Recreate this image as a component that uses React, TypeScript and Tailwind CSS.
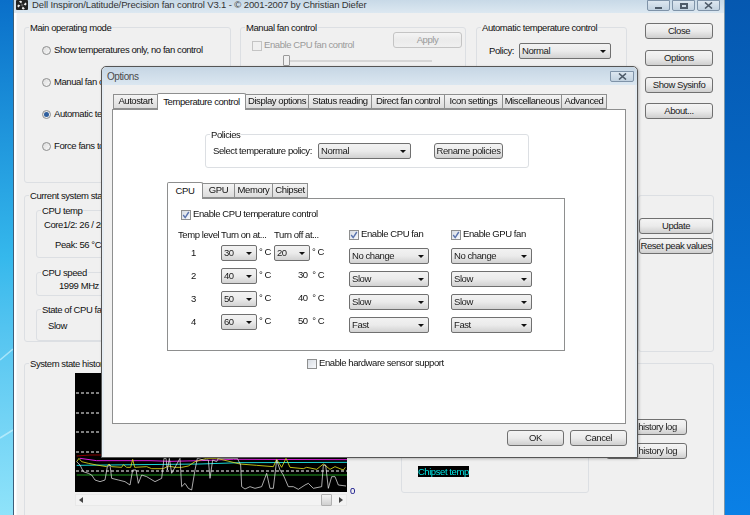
import React from 'react';

const Btn = ({ label, className = '' }: { label: string; className?: string }) => (
  <div className={`h-[16px] flex items-center justify-center border border-[#707070] rounded-[3px] bg-gradient-to-b from-[#f4f4f4] via-[#ebebeb] to-[#cfcfcf] text-[#1a1a1a] whitespace-nowrap ${className}`}>
    {label}
  </div>
);

const Combo = ({ value, className = '' }: { value: string; className?: string }) => (
  <div className={`h-[16px] flex items-center justify-between pl-[2px] pr-[4px] border border-[#707070] rounded-[2px] bg-gradient-to-b from-[#f2f2f2] via-[#ebebeb] to-[#d2d2d2] text-[#1a1a1a] ${className}`}>
    <span>{value}</span>
    <svg width="6" height="3" viewBox="0 0 6 3"><path d="M0 0h6L3 3z" fill="#111" /></svg>
  </div>
);

const Check = ({ label, checked, disabled }: { label: string; checked?: boolean; disabled?: boolean }) => (
  <div className="h-[13px] flex items-center gap-[2px] whitespace-nowrap">
    <div className={`w-[10px] h-[10px] border flex items-center justify-center ${disabled ? 'border-[#c4c4c4] bg-[#f0f0f0]' : 'border-[#8e8f8f] bg-gradient-to-br from-[#d8dde4] to-[#f8f9fb]'}`}>
      {checked && (
        <svg width="8" height="8" viewBox="0 0 8 8"><path d="M1.2 4l2 2.6L6.8 1" fill="none" stroke="#5a74ae" strokeWidth="1.4" /></svg>
      )}
    </div>
    <span className={disabled ? 'text-[#9a9a9a]' : ''}>{label}</span>
  </div>
);

const Radio = ({ label, checked }: { label: string; checked?: boolean }) => (
  <div className="h-[13px] flex items-center gap-[3px] whitespace-nowrap">
    <div className="w-[9px] h-[9px] rounded-full border border-[#8e8f8f] bg-gradient-to-br from-[#dcdcdc] to-[#f8f8f8] flex items-center justify-center">
      {checked && <div className="w-[5px] h-[5px] rounded-full bg-[#2f5f9e]" />}
    </div>
    <span>{label}</span>
  </div>
);

const Group = ({ title, className = '', children }: { title?: string; className?: string; children?: React.ReactNode }) => (
  <fieldset className={`min-w-0 border border-[#dcdfe3] rounded-[3px] ${className}`}>
    {title && <legend className="ml-[4px] px-[1px] h-[13px] leading-[13px] whitespace-nowrap">{title}</legend>}
    {children}
  </fieldset>
);

const Tab = ({ label, width, active }: { label: string; width: string; active?: boolean }) => (
  <div
    className={`${width} flex items-center justify-center whitespace-nowrap border border-[#8e8f8f] ${
      active
        ? 'relative z-10 h-[17px] -mb-px -mt-[1px] border-b-0 bg-white rounded-t-[2px]'
        : 'h-[15px] -ml-px bg-gradient-to-b from-[#f4f4f4] to-[#dcdcdc]'
    }`}
  >
    {label}
  </div>
);

const TitleBtn = ({ children, w = 'w-[23px]' }: { children: React.ReactNode; w?: string }) => (
  <div className={`${w} h-[11px] flex items-center justify-center border border-[#7f93a8] rounded-b-[2px] bg-gradient-to-b from-[#dde7f0] to-[#c2d2e0]`}>
    {children}
  </div>
);

const CloseGlyph = () => (
  <svg width="9" height="7" viewBox="0 0 9 7"><path d="M1 0.5l7 6M8 0.5l-7 6" stroke="#4d5a68" strokeWidth="1.6" /></svg>
);

const tempRows = [
  { level: '1', on: '30', off: '20' },
  { level: '2', on: '40', off: '30' },
  { level: '3', on: '50', off: '40' },
  { level: '4', on: '60', off: '50' },
];
const fanValues = ['No change', 'Slow', 'Slow', 'Fast'];

const whitePts =
  '50,215 60,225 70,245 85,250 95,255 105,270 120,275 135,270 142,230 150,225 155,265 175,270 195,275 210,285 218,240 228,240 235,280 245,255 260,260 285,275 305,265 312,205 318,205 322,240 328,205 335,250 360,205 365,290 375,280 385,295 395,300 405,240 412,205 430,210 445,210 450,265 458,210 470,215 475,205 525,205 532,205 542,225 545,290 555,297 570,290 585,295 605,290 620,250 630,295 640,295 650,210 660,240 670,255 685,290 700,290 715,298 735,285 745,280 760,295 785,290 790,225 797,225 805,295 815,260 825,260 835,285 858,288';
const yellowPts =
  '50,215 57,205 65,215 85,220 110,225 140,230 147,222 155,230 185,232 190,224 200,232 212,232 218,208 224,232 260,230 275,236 310,236 325,228 345,232 365,232 385,228 405,215 440,205 470,205 540,222 590,226 640,230 650,208 665,232 678,205 690,232 730,236 740,232 770,238 790,222 810,238 825,230 850,240 856,232';

const Chart = () => (
  <svg width="272" height="119" viewBox="45 -51 816 357" className="bg-black block">
    {[9, 69, 126, 186, 243].map((y) => (
      <line key={y} x1="48" x2="861" y1={y} y2={y} stroke="#fff" strokeWidth="3" strokeDasharray="9 6" />
    ))}
    <polyline points="50,198 90,195 861,195" fill="none" stroke="#8b0000" strokeWidth="3" />
    <polyline points="50,255 861,255" fill="none" stroke="#1f9a1f" strokeWidth="3" />
    <polyline points="50,226 420,222 540,218 861,217" fill="none" stroke="#19d8d8" strokeWidth="3" />
    <polyline points="60,205 110,212 270,212 330,214 420,212 520,208 861,209" fill="none" stroke="#e020e0" strokeWidth="3" />
    <polyline points={yellowPts} fill="none" stroke="#e8e820" strokeWidth="2.4" />
    <polyline points={whitePts} fill="none" stroke="#e8e8e8" strokeWidth="2.2" />
  </svg>
);

const OptionsDialog = () => (
  <div className="absolute left-[101px] top-[66px] w-[537px] h-[392px] flex flex-col border border-[#555] rounded-t-[5px] bg-[#f0f0f0] shadow-[1px_1px_3px_rgba(0,0,0,0.25)]">
    <div className="h-[18px] shrink-0 flex items-center justify-between pl-[5px] pr-[3px] rounded-t-[5px] bg-gradient-to-b from-[#c6d6e4] to-[#dbe7f1]">
      <span className="text-[#4b4b4b] text-[10px]">Options</span>
      <TitleBtn w="w-[24px]"><CloseGlyph /></TitleBtn>
    </div>
    <div className="flex-1 flex flex-col px-[8px] pt-[9px] border-x-2 border-[#e6edf3]">
      <div className="flex pl-[1px]">
        <Tab label="Autostart" width="w-[45px] !ml-0" />
        <Tab label="Temperature control" width="w-[89px] -ml-px" active />
        <Tab label="Display options" width="w-[64px]" />
        <Tab label="Status reading" width="w-[64px]" />
        <Tab label="Direct fan control" width="w-[74px]" />
        <Tab label="Icon settings" width="w-[59px]" />
        <Tab label="Miscellaneous" width="w-[60px]" />
        <Tab label="Advanced" width="w-[46px]" />
      </div>
      <div className="w-[514px] h-[315px] flex flex-col border border-[#8e8f8f] bg-white pl-[54px]">
        <div className="ml-[38px] mt-[18px] w-[324px]">
          <Group title="Policies" className="h-[40px]">
            <div className="flex items-center pl-[7px] mt-[2px]">
              <span className="w-[105px] whitespace-nowrap">Select temperature policy:</span>
              <Combo value="Normal" className="w-[93px]" />
              <Btn label="Rename policies" className="w-[69px] ml-[23px]" />
            </div>
          </Group>
        </div>
        <div className="flex mt-[15px] h-[15px]">
          <Tab label="CPU" width="w-[36px]" active />
          <Tab label="GPU" width="w-[33px]" />
          <Tab label="Memory" width="w-[39px]" />
          <Tab label="Chipset" width="w-[36px]" />
        </div>
        <div className="w-[398px] h-[153px] border border-[#8e8f8f] bg-white pl-[10px] pt-[9px]">
          <div className="pl-[3px]">
            <Check label="Enable CPU temperature control" checked />
          </div>
          <div className="flex mt-[7px]">
            <div className="w-[171px]">
              <div className="flex h-[13px] whitespace-nowrap">
                <span className="w-[43px]">Temp level</span>
                <span className="w-[53px]">Turn on at...</span>
                <span>Turn off at...</span>
              </div>
              <div className="flex flex-col gap-[7px] mt-[4px]">
                {tempRows.map((r, i) => (
                  <div key={r.level} className="flex items-center h-[16px]">
                    <span className="w-[43px] pl-[13px]">{r.level}</span>
                    <div className="w-[53px] flex items-center">
                      <Combo value={r.on} className="w-[36px]" />
                      <span className="ml-[2px] -mt-[2px]">° C</span>
                    </div>
                    {i === 0 ? (
                      <div className="flex items-center">
                        <Combo value={r.off} className="w-[36px]" />
                        <span className="ml-[2px] -mt-[2px]">° C</span>
                      </div>
                    ) : (
                      <span className="pl-[24px] whitespace-nowrap -mt-[2px]">{r.off}&nbsp; ° C</span>
                    )}
                  </div>
                ))}
              </div>
            </div>
            {['Enable CPU fan', 'Enable GPU fan'].map((label, col) => (
              <div key={label} className={col === 0 ? 'w-[102px]' : 'w-[81px]'}>
                <Check label={label} checked />
                <div className="flex flex-col gap-[7px] mt-[7px]">
                  {fanValues.map((v, i) => (
                    <Combo key={i} value={v} className={col === 0 ? 'w-[80px]' : 'w-[81px]'} />
                  ))}
                </div>
              </div>
            ))}
          </div>
        </div>
        <div className="ml-[140px] mt-[6px]">
          <Check label="Enable hardware sensor support" />
        </div>
      </div>
      <div className="flex justify-end gap-[6px] mt-[6px]">
        <Btn label="OK" className="w-[57px]" />
        <Btn label="Cancel" className="w-[57px]" />
      </div>
    </div>
  </div>
);

export default function App() {
  return (
    <div className="relative w-[750px] h-[515px] overflow-hidden flex blur-[0.3px] text-[9.5px] tracking-[-0.42px] text-[#111] font-['Liberation_Sans',sans-serif]">
      <div className="w-[13px] bg-gradient-to-b from-[#0a6fc9] via-[#35b8ec] to-[#8fe3fa]">
        <svg width="13" height="515" viewBox="0 0 13 515" className="block">
          <path d="M0 360L13 349M0 438L13 430" stroke="#d8f6ff" strokeOpacity="0.6" strokeWidth="1.5" />
        </svg>
      </div>
      <div className="w-[712px] flex flex-col border-l border-[#3d5f7a] border-r border-r-[#7d97aa]">
        <div className="h-[13px] shrink-0 flex items-start pl-[2px] pr-[3px] bg-gradient-to-b from-[#c8d9e7] to-[#dce8f1]">
          <svg width="12" height="10" viewBox="0 0 12 10" className="mr-[4px]">
            <rect width="12" height="10" rx="1" fill="#222" />
            <circle cx="6" cy="5" r="1.2" fill="#555" />
            <path d="M3 1.5a2 2 0 0 1 3 0L5.2 3.6zM9.6 2.6a2 2 0 0 1 0 3L7.6 4.6zM8.8 8.6a2 2 0 0 1-3 0L6.8 6.5zM2.3 7.4a2 2 0 0 1 0-3L4.4 5.4z" fill="#eee" />
          </svg>
          <span className="text-[#333] text-[9.5px] tracking-[-0.12px] leading-[10px] whitespace-nowrap">Dell Inspiron/Latitude/Precision fan control V3.1 - © 2001-2007 by Christian Diefer</span>
          <div className="ml-auto flex gap-[2px] pr-[1px]">
            <TitleBtn><div className="w-[7px] h-[2px] mt-[4px] bg-[#4d5a68]" /></TitleBtn>
            <TitleBtn><div className="w-[8px] h-[6px] border-2 border-[#4d5a68]" /></TitleBtn>
            <TitleBtn><CloseGlyph /></TitleBtn>
          </div>
        </div>
        <div className="flex-1 bg-[#f0f0f0] ml-[2px] pl-[7px] pt-[8px] border-l border-[#f6f8fa]">
          <div className="flex h-[162px]">
            <Group title="Main operating mode" className="w-[207px]">
              <div className="flex flex-col gap-[19px] pl-[17px] pt-[10px]">
                <Radio label="Show temperatures only, no fan control" />
                <Radio label="Manual fan control" />
                <Radio label="Automatic temperature control" checked />
                <Radio label="Force fans to full speed" />
              </div>
            </Group>
            <Group title="Manual fan control" className="w-[226px] ml-[9px]">
              <div className="flex items-start justify-between pl-[11px] pr-[3px]">
                <div className="mt-[5px]">
                  <Check label="Enable CPU fan control" disabled />
                </div>
                <Btn label="Apply" className="w-[69px] -mt-[2px] !border-[#c4c4c4] !text-[#9a9a9a] !from-[#f4f4f4] !to-[#f0f0f0]" />
              </div>
              <div className="relative ml-[43px] mr-[33px] mt-[8px] h-[2px] bg-[#d6d6d6]">
                <div className="absolute -left-[1px] -top-[5px] w-[7px] h-[11px] border border-[#9a9a9a] rounded-[1px] bg-[#f0f0f0]" />
              </div>
            </Group>
            <Group title="Automatic temperature control" className="w-[151px] ml-[10px]">
              <div className="flex items-center pl-[12px] pt-[9px]">
                <span className="w-[30px]">Policy:</span>
                <Combo value="Normal" className="w-[92px]" />
              </div>
            </Group>
            <div className="w-[68px] ml-[18px] flex flex-col gap-[11px] pt-[2px]">
              <Btn label="Close" />
              <Btn label="Options" />
              <Btn label="Show Sysinfo" />
              <Btn label="About..." className="-mt-px" />
            </div>
          </div>
          <div className="flex items-start mt-[6px]">
            <Group title="Current system state" className="w-[604px] h-[153px]">
              <div className="flex flex-col pl-[11px] pt-[2px]">
                <Group title="CPU temp" className="w-[180px] h-[54px]">
                  <div className="pl-[7px] pt-[1px]">Core1/2: 26 / 26 °C</div>
                  <div className="pl-[18px] mt-[6px]">Peak: 56 °C</div>
                </Group>
                <Group title="CPU speed" className="w-[180px] h-[30px] mt-[8px]">
                  <div className="pl-[22px]">1999 MHz</div>
                </Group>
                <Group title="State of CPU fan" className="w-[180px] h-[38px] mt-[7px]">
                  <div className="pl-[11px] pt-[3px]">Slow</div>
                </Group>
              </div>
            </Group>
            <Group className="w-[76px] h-[157px] ml-[10px] mt-[6px]">
              <div className="flex flex-col gap-[4px] pt-[22px]">
                <Btn label="Update" />
                <Btn label="Reset peak values" />
              </div>
            </Group>
          </div>
          <Group title="System state history" className="w-[690px] h-[170px] mt-[5px]">
            <div className="flex pl-[50px] pt-[3px]">
              <div className="w-[272px]">
                <Chart />
                <div className="mt-[2px] h-[12px] flex items-center justify-between px-[3px] bg-[#f3f3f3] border border-[#e8e8e8]">
                  <svg width="4" height="6" viewBox="0 0 4 6"><path d="M4 0v6L0 3z" fill="#444" /></svg>
                  <div className="ml-auto mr-[7px] w-[11px] h-[12px] border border-[#b0b0b0] rounded-[1px] bg-gradient-to-b from-[#f4f4f4] to-[#d0d0d0]" />
                  <svg width="4" height="6" viewBox="0 0 4 6"><path d="M0 0v6l4-3z" fill="#444" /></svg>
                </div>
              </div>
              <span className="self-start mt-[111px] ml-[3px] text-[#000080]">0</span>
              <Group title="Chart legend" className="w-[188px] h-[120px] ml-[46px] flex-none">
                <div className="mt-[80px] ml-[16px] w-[51px] h-[11px] bg-black text-[#00e6e6] leading-[11px] whitespace-nowrap">Chipset temp</div>
              </Group>
              <div className="w-[81px] ml-[17px] flex flex-col gap-[8px] mt-[46px]">
                <Btn label="Save history log" />
                <Btn label="Clear history log" />
              </div>
            </div>
          </Group>
        </div>
      </div>
      <div className="flex-1 bg-gradient-to-b from-[#0558b0] to-[#0a80e6]" />
      <OptionsDialog />
    </div>
  );
}
